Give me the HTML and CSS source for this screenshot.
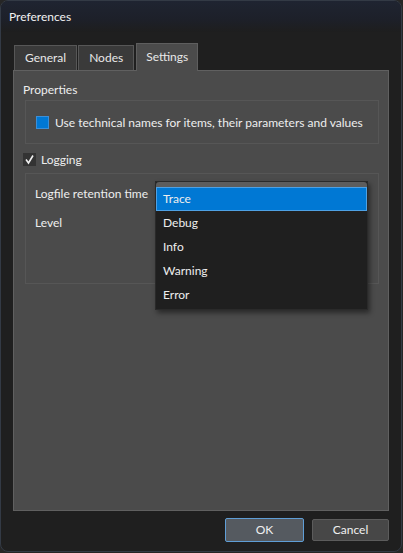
FILE: index.html
```html
<!DOCTYPE html>
<html>
<head>
<meta charset="utf-8">
<link rel="stylesheet" href="styles.css">
</head>
<body>
<div class="window">
  <div class="titlebar">Preferences</div>
  <div class="content">
    <div class="tabs">
      <div class="tab">General</div>
      <div class="tab">Nodes</div>
      <div class="tab active">Settings</div>
    </div>
    <div class="panel">
      <div class="section-label">Properties</div>
      <div class="group group-props">
        <div class="check-row">
          <span class="checkbox blue"></span>
          <span>Use technical names for items, their parameters and values</span>
        </div>
      </div>
      <div class="check-row logging">
        <span class="checkbox dark"><svg width="11" height="11" viewBox="0 0 11 11"><path d="M2 5.5 L4.5 9 L9 1.5" fill="none" stroke="#f0f0f0" stroke-width="1.6"/></svg></span>
        <span>Logging</span>
      </div>
      <div class="group group-log">
        <div class="field-row">Logfile retention time</div>
        <div class="field-row">Level</div>
        <div class="popup">
          <div class="combo-top"></div>
          <div class="item selected">Trace</div>
          <div class="item">Debug</div>
          <div class="item">Info</div>
          <div class="item">Warning</div>
          <div class="item">Error</div>
        </div>
      </div>
    </div>
    <div class="buttons">
      <div class="btn default">OK</div>
      <div class="btn">Cancel</div>
    </div>
  </div>
</div>
</body>
</html>
```
FILE: styles.css
```css
html, body {
  margin: 0;
  padding: 0;
  background: #262626;
  width: 403px;
  height: 553px;
  overflow: hidden;
  font-family: "Lato", "Noto Sans", sans-serif;
  font-size: 12px;
  color: #eeeeee;
}
.window {
  box-sizing: border-box;
  width: 402px;
  height: 552px;
  background: #1f1f1f;
  border: 1px solid #333a45;
  border-radius: 8px;
  overflow: hidden;
  display: flex;
  flex-direction: column;
}
.titlebar {
  height: 31px;
  padding-left: 8px;
  line-height: 31px;
  color: #f2f2f2;
  background: linear-gradient(#1f2431, #1d2029 60%, #1e1e1e);
}
.content {
  flex: 1;
  display: flex;
  flex-direction: column;
  padding: 10px 12px 11px 12px;
}
.tabs {
  display: flex;
  align-items: flex-end;
  height: 28px;
  padding-left: 1px;
}
.tab {
  box-sizing: border-box;
  height: 25px;
  line-height: 23px;
  padding: 0 10px;
  background: #3a3a3a;
  border: 1px solid #575757;
  border-bottom: none;
  color: #e8e8e8;
}
.tab + .tab {
  margin-left: 1px;
}
.tab.active {
  height: 28px;
  line-height: 26px;
  padding: 0 9px;
  background: #4b4b4b;
  border-color: #5e5e5e;
  margin-left: 2px;
  position: relative;
  top: 1px;
  z-index: 2;
}
.panel {
  box-sizing: border-box;
  height: 441px;
  background: #4b4b4b;
  border: 1px solid #606060;
  padding: 10px 9px 0 9px;
  display: flex;
  flex-direction: column;
}
.section-label {
  height: 18px;
  line-height: 18px;
  color: #eeeeee;
}
.group {
  border: 1px solid #565656;
  margin-left: 2px;
}
.group-props {
  height: 42px;
  margin-top: 1px;
  display: flex;
  align-items: center;
  padding-left: 10px;
}
.check-row {
  display: flex;
  align-items: center;
  gap: 6px;
}
.checkbox {
  box-sizing: border-box;
  width: 13px;
  height: 13px;
  display: inline-flex;
  align-items: center;
  justify-content: center;
}
.checkbox.blue {
  background: #0078d4;
  border: 1px solid #3b8fd8;
}
.checkbox.dark {
  background: #333333;
}
.logging {
  margin-top: 8px;
  height: 14px;
  gap: 5px;
}
.group-log {
  position: relative;
  margin-top: 7px;
  height: 111px;
  box-sizing: border-box;
  padding: 11px 0 0 9px;
}
.field-row {
  height: 29px;
  line-height: 18px;
}
.popup {
  position: absolute;
  left: 129px;
  top: 7px;
  width: 211px;
  background: #1f1f1f;
  border: 1px solid #2a2a2a;
  box-shadow: 2px 3px 5px rgba(0,0,0,0.45);
  padding-bottom: 2px;
}
.combo-top {
  height: 5px;
  background: #5d5d5d;
  border-radius: 3px 3px 0 0;
}
.item {
  height: 24px;
  line-height: 24px;
  padding-left: 7px;
  color: #eeeeee;
}
.item.selected {
  box-sizing: border-box;
  background: #0078d4;
  border: 1px solid #4ea1e4;
  line-height: 22px;
  padding-left: 6px;
}
.buttons {
  display: flex;
  justify-content: flex-end;
  gap: 8px;
  margin-top: 8px;
}
.btn {
  box-sizing: border-box;
  width: 77px;
  height: 22px;
  line-height: 20px;
  text-align: center;
  background: #474747;
  border: 1px solid #5c5c5c;
  border-radius: 2px;
  color: #f0f0f0;
}
.btn.default {
  width: 79px;
  height: 24px;
  line-height: 22px;
  margin-top: -1px;
  background: #555a60;
  border-color: #5f9ed6;
}
```
